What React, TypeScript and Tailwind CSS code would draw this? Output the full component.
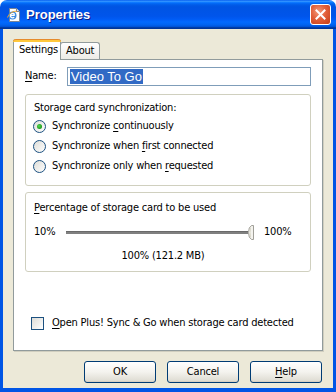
import React from 'react';

const font = "font-['DejaVu_Sans_Condensed','Liberation_Sans',sans-serif]";

const Radio: React.FC<{ checked?: boolean }> = ({ checked }) => (
  <svg width="13" height="13" viewBox="0 0 13 13" className="shrink-0">
    <defs>
      <linearGradient id="rg" x1="0" y1="0" x2="1" y2="1">
        <stop offset="0" stopColor="#dcdcd7" />
        <stop offset="1" stopColor="#ffffff" />
      </linearGradient>
      <radialGradient id="dot" cx="0.4" cy="0.4" r="0.6">
        <stop offset="0" stopColor="#55d651" />
        <stop offset="1" stopColor="#1a9a18" />
      </radialGradient>
    </defs>
    <circle cx="6.5" cy="6.5" r="6" fill="url(#rg)" stroke="#1c5180" strokeWidth="1" />
    {checked && <circle cx="6.5" cy="6.5" r="2.5" fill="url(#dot)" />}
  </svg>
);

const Mn: React.FC<{ children: React.ReactNode }> = ({ children }) => (
  <span className="underline underline-offset-[2px] decoration-1">{children}</span>
);

const Button: React.FC<{ children: React.ReactNode }> = ({ children }) => (
  <button className="w-[72px] h-[22px] rounded-[3px] border border-[#003c74] bg-gradient-to-b from-white via-[#f4f3ee] to-[#dcdad0] text-[11px] text-black shadow-[inset_0_-1px_0_#d6d0c5]">
    {children}
  </button>
);

export default function App() {
  return (
    <div className={`w-[336px] h-[392px] flex flex-col ${font} text-[11px] tracking-[-0.2px] text-black select-none`}>
      {/* title bar */}
      <div className="h-[29px] shrink-0 rounded-t-[7px] flex items-center pl-[6px] pr-[5px] bg-[linear-gradient(to_bottom,#0058ee_0%,#3593ff_4%,#288eff_6%,#127dff_8%,#036ffc_10%,#0262ee_14%,#0057e5_20%,#0054e3_24%,#0055eb_56%,#005bf5_66%,#026afe_76%,#0062ef_86%,#0052d6_92%,#0040ab_94%,#003092_100%)]">
        <svg width="16" height="16" viewBox="0 0 16 16" className="shrink-0">
          <path d="M3.5 1.5h7l3 3v10h-10z" fill="#ffffff" stroke="#7a8595" />
          <path d="M10.5 1.5v3h3" fill="#e8e8e8" stroke="#7a8595" />
          <circle cx="6.5" cy="8.5" r="4" fill="#3a8ae0" />
          <path d="M4.2 8.3h4.6M8.6 7.6a2.2 2.2 0 1 0-0.4 2.6" stroke="#ffffff" strokeWidth="1.3" fill="none" />
          <path d="M1.5 10.5C3 6 8 3.5 11 4.5" stroke="#f0a020" strokeWidth="1" fill="none" />
        </svg>
        <span className="ml-[4px] text-white font-bold text-[13px] tracking-normal font-['Liberation_Sans',sans-serif] [text-shadow:1px_1px_0_#0a1e8c]">
          Properties
        </span>
        <div className="ml-auto w-[21px] h-[21px] rounded-[3px] border border-white flex items-center justify-center bg-[radial-gradient(circle_at_40%_35%,#f39a7a_0%,#e2603a_45%,#c43c15_100%)]">
          <svg width="11" height="11" viewBox="0 0 11 11">
            <path d="M1.5 1.5l8 8M9.5 1.5l-8 8" stroke="#ffffff" strokeWidth="2" strokeLinecap="square" />
          </svg>
        </div>
      </div>

      {/* client area */}
      <div className="flex-1 flex flex-col bg-[#ece9d8] border-x-[3px] border-b-[4px] border-[#0055e5] px-[10px]">
        {/* tabs */}
        <div className="flex items-end h-[20px] mt-[10px]">
          <div className="relative z-10 h-[21px] -mb-px w-[48px] bg-white border-x border-[#919b9c] rounded-t-[3px] flex flex-col">
            <div className="h-[3px] -mx-px rounded-t-[3px] bg-[#ffc83c] border-t border-[#e68b2c]" />
            <div className="flex-1 flex items-center pl-[5px] pb-[2px]">Settings</div>
          </div>
          <div className="h-[17px] w-[40px] -ml-px border border-b-0 border-[#919b9c] rounded-t-[3px] bg-gradient-to-b from-white to-[#ecebe6] flex items-center pl-[5px]">
            About
          </div>
        </div>

        {/* panel */}
        <div className="h-[292px] bg-white border border-[#919b9c] shadow-[1px_1px_0_#d0cebf] flex flex-col px-[11px]">
          <div className="flex items-center mt-[7px] h-[19px]">
            <span className="w-[42px]"><Mn>N</Mn>ame:</span>
            <div className="w-[245px] h-[19px] border border-[#7f9db9] flex items-center pl-[2px] text-[13px] tracking-normal font-['Liberation_Sans',sans-serif]">
              <span className="bg-[#316ac5] text-white leading-[15px] px-px">Video To Go</span>
            </div>
          </div>

          <div className="mt-[8px] h-[92px] border border-[#d0d0bf] rounded-[3px] px-[7px] pt-[6px]">
            <div className="h-[13px] leading-[13px] pl-px">Storage card synchronization:</div>
            <div className="mt-[2px]">
              <div className="h-[20px] flex items-center gap-[6px]">
                <Radio checked />
                <span>Synchronize <Mn>c</Mn>ontinuously</span>
              </div>
              <div className="h-[20px] flex items-center gap-[6px]">
                <Radio />
                <span>Synchronize when <Mn>f</Mn>irst connected</span>
              </div>
              <div className="h-[20px] flex items-center gap-[6px]">
                <Radio />
                <span>Synchronize only when <Mn>r</Mn>equested</span>
              </div>
            </div>
          </div>

          <div className="mt-[6px] h-[80px] border border-[#d0d0bf] rounded-[3px] px-[7px] pt-[8px]">
            <div className="h-[13px] leading-[13px] pl-px"><Mn>P</Mn>ercentage of storage card to be used</div>
            <div className="mt-[8px] h-[20px] flex items-center">
              <span className="w-[33px] pl-px">10%</span>
              <div className="w-[182px] h-[3px] bg-[#808080] border-t border-[#6a6a6a]" />
              <svg width="6" height="15" viewBox="0 0 6 15" className="shrink-0">
                <path d="M5.5 0.5H3.5Q0.5 2 0.5 7.5Q0.5 13 3.5 14.5H5.5Z" fill="#f4f3ee" stroke="#a09f98" />
                <path d="M2.5 3Q1.6 7.5 2.5 12" stroke="#d8d6c8" fill="none" />
              </svg>
              <span className="ml-[10px]">100%</span>
            </div>
            <div className="mt-[7px] h-[13px] leading-[13px] text-center pr-[10px]">100% (121.2 MB)</div>
          </div>

          <div className="mt-[45px] h-[13px] flex items-center pl-[6px]">
            <div className="w-[13px] h-[13px] border border-[#1c5180] bg-gradient-to-br from-[#dcdcd7] to-white shrink-0" />
            <span className="ml-[8px]"><Mn>O</Mn>pen Plus! Sync &amp; Go when storage card detected</span>
          </div>
        </div>

        {/* buttons */}
        <div className="mt-[10px] flex justify-end gap-[11px] pr-px">
          <Button>OK</Button>
          <Button>Cancel</Button>
          <Button><Mn>H</Mn>elp</Button>
        </div>
      </div>
    </div>
  );
}
